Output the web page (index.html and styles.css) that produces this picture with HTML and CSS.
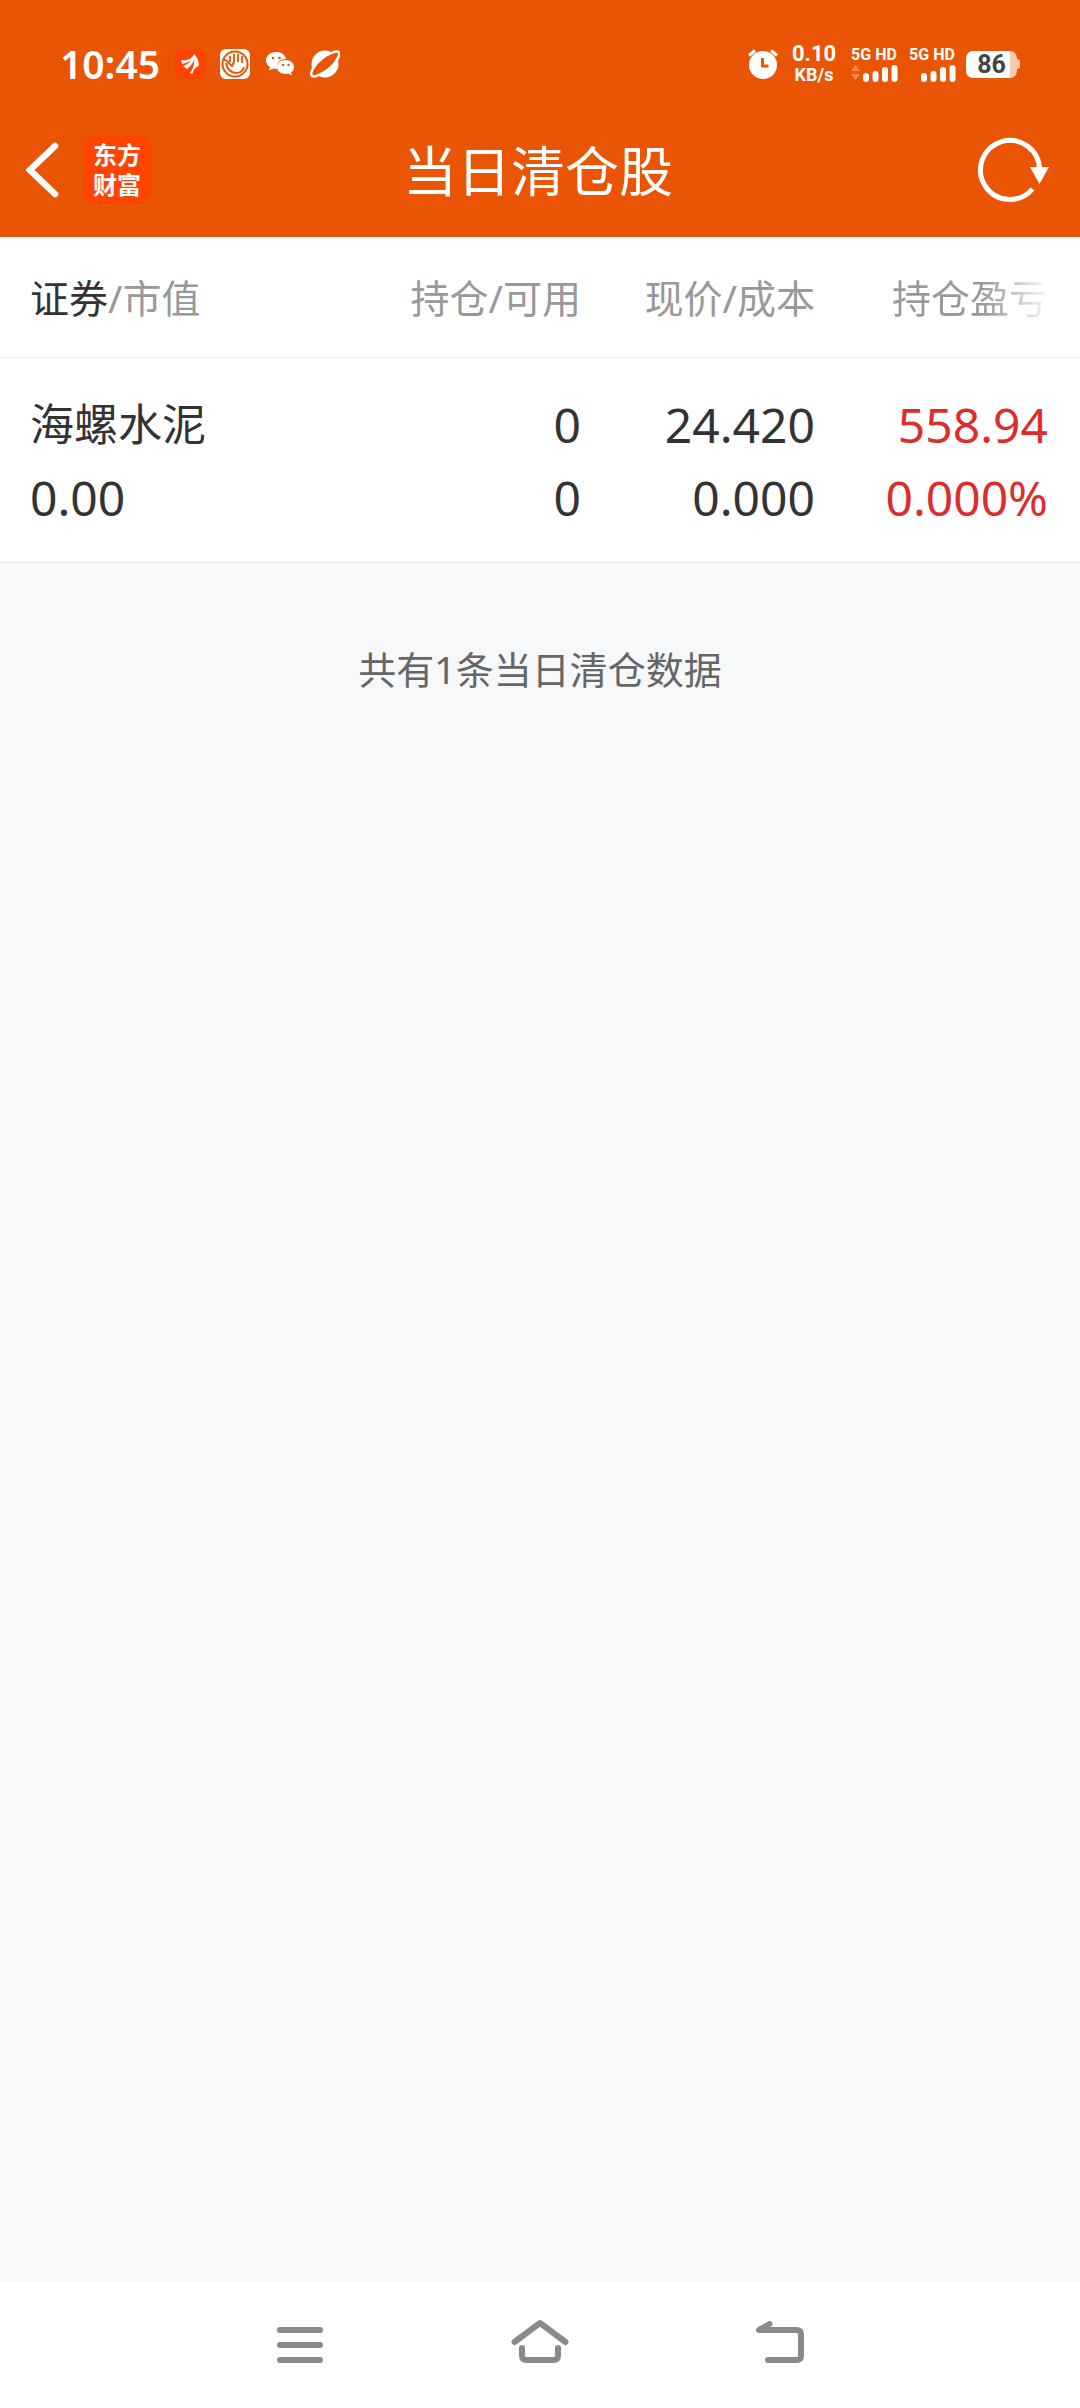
FILE: index.html
```html
<!DOCTYPE html>
<html lang="zh-CN">
<head>
<meta charset="utf-8">
<meta name="viewport" content="width=device-width">
<title>当日清仓股</title>
<link rel="stylesheet" href="styles.css">
</head>
<body>
<header class="top">
  <div class="status">
    <div class="status-left">
      <span class="clock">10:45</span>
      <svg class="status-icon" viewBox="0 0 30 30"><rect width="30" height="30" rx="5" fill="#ff4400"/><path d="M6 11c6 1 11-1 13-6 1 5-6 9-12 10zM8 17c6-2 9-6 11-12 2 6-2 11-7 15zM15 24c4-5 5-12 4-19 4 4 6 10 4 13-1-1-2 0-2 1-2 0-2 2-4 6z" fill="#fff"/></svg>
      <svg class="status-icon" viewBox="0 0 30 30"><rect width="30" height="30" rx="6" fill="#fff"/><g fill="none" stroke="#e95504"><circle cx="15" cy="15" r="12.500" stroke-width="2"/><path d="M10 7v6M14 5v7M18 5v8M22 7v7" stroke-width="1.800"/><path d="M4 11c3-1 6 5 8 6 1-2 2-3 2-5" stroke-width="2"/><path d="M6 14c1 6 5 10 10 10 4 0 7-2 8-6" stroke-width="2"/></g></svg>
      <svg class="status-icon" viewBox="0 0 30 30"><g fill="#fff"><path d="M11 3C5 3 1 7 1 11.500c0 3 1.500 5 4 6.500l-1 3.500 4-2 4 .5c-1-6 3-10 9-10C20 5.500 16 3 11 3z"/><path d="M20.500 11c-5 0-8.500 3-8.500 7s3.500 7 8.500 7l3-.5 3.500 2-1-3c2-1.500 3-3.500 3-5.500 0-4-3.500-7-8.500-7z"/></g><g fill="#e95504"><circle cx="8" cy="9" r="1.300"/><circle cx="14.500" cy="9" r="1.300"/><circle cx="18" cy="16" r="1.200"/><circle cx="23.500" cy="16" r="1.200"/></g></svg>
      <svg class="status-icon" viewBox="0 0 30 30"><circle cx="15" cy="15" r="13.500" fill="#fff"/><ellipse cx="15" cy="15" rx="15" ry="5" transform="rotate(-40 15 15)" fill="#e95504"/><path d="M22 3.500c6-2 8-1 7 3-.5 2-1.500 4-3 6M4 17.500c-5 8-3 12 4 9" fill="none" stroke="#fff" stroke-width="2.500"/></svg>
    </div>
    <div class="status-right">
      <svg class="status-icon" viewBox="0 0 30 30"><circle cx="15" cy="16" r="14" fill="#fff"/><path d="M1 6.500l6-5M29 6.500l-6-5" stroke="#fff" stroke-width="3"/><path d="M14.500 9v8h6" fill="none" stroke="#e95504" stroke-width="3"/></svg>
      <div class="speed"><span class="speed-value">0.10</span><span class="speed-unit">KB/s</span></div>
      <div class="signal"><span class="signal-label">5G HD</span><svg class="signal-bars" viewBox="0 0 48 18"><path d="M1 7l4.500-6 4.500 6zM1 10l4.500 6 4.500-6z" fill="#f58a50"/><path d="M16 12v3M25.500 10v5M35 6v9M44.500 4v11" stroke="#fff" stroke-width="6" stroke-linecap="round"/></svg></div>
      <div class="signal"><span class="signal-label">5G HD</span><svg class="signal-bars" viewBox="0 0 48 18"><path d="M16 12v3M25.500 10v5M35 6v9M44.500 4v11" stroke="#fff" stroke-width="6" stroke-linecap="round"/></svg></div>
      <div class="battery"><span class="battery-level">86</span></div>
    </div>
  </div>
  <div class="appbar">
    <div class="appbar-side">
      <button class="icon-button" type="button" aria-label="返回"><svg class="back-icon" viewBox="0 0 36 60"><path d="M29 6L4 30l25 24" fill="none" stroke="#fff" stroke-width="6.500" stroke-linecap="round"/></svg></button>
      <a class="logo" href="#"><span>东方</span><span>财富</span></a>
    </div>
    <h1 class="title">当日清仓股</h1>
    <div class="appbar-side appbar-end">
      <button class="icon-button" type="button" aria-label="刷新"><svg class="refresh-icon" viewBox="0 0 72 68"><path d="M54.500 53A29.500 29.500 0 1 1 61.500 34" fill="none" stroke="#fff" stroke-width="5"/><path d="M52 31h19l-9.500 17z" fill="#fff"/></svg></button>
    </div>
  </div>
</header>

<main class="content">
  <table class="holdings">
    <colgroup><col><col class="col-number"><col class="col-number"><col class="col-profit"></colgroup>
    <thead>
      <tr><th scope="col"><span class="strong">证券</span>/市值</th><th scope="col">持仓/可用</th><th scope="col">现价/成本</th><th scope="col"><span class="fade">持仓盈亏</span></th></tr>
    </thead>
    <tbody>
      <tr>
        <td><div class="name">海螺水泥</div><div>0.00</div></td>
        <td><div>0</div><div>0</div></td>
        <td><div>24.420</div><div>0.000</div></td>
        <td class="up"><div>558.94</div><div>0.000%</div></td>
      </tr>
    </tbody>
  </table>
  <p class="summary">共有1条当日清仓数据</p>
</main>

<nav class="navbar">
  <button class="nav-button" type="button" aria-label="最近任务"><svg class="nav-icon" viewBox="0 0 60 60"><path d="M10 15h40M10 30h40M10 45h40"/></svg></button>
  <button class="nav-button" type="button" aria-label="主屏幕"><svg class="nav-icon" viewBox="0 0 60 60"><path d="M4.500 27L30 8l25.500 19M12 33v7.500q0 4.500 4.500 4.500h27q4.500 0 4.500-4.500V33"/></svg></button>
  <button class="nav-button" type="button" aria-label="返回上一级"><svg class="nav-icon" viewBox="0 0 60 60"><path d="M19.500 9L9 15H46.500q4.500 0 4.500 4.500v21q0 4.500-4.500 4.500H18"/></svg></button>
</nav>
</body>
</html>
```
FILE: styles.css
```css
* {
  box-sizing: border-box;
}

body {
  display: flex;
  flex-direction: column;
  min-height: 100vh;
  margin: 0;
  background: #f7f8fa;
  color: #333;
  font-family: "Noto Sans", "Noto Sans CJK SC", sans-serif;
}

button {
  padding: 0;
  border: 0;
  background: none;
}

svg {
  display: block;
}

/* Status bar */
.top {
  padding-bottom: 25px;
  background: #e95504;
  color: #fff;
}

.status {
  display: flex;
  justify-content: space-between;
  align-items: center;
  height: 128px;
  padding: 0 60px;
}

.status-left {
  display: flex;
  align-items: center;
  gap: 15px;
}

.status-right {
  display: flex;
  align-items: center;
  gap: 10px;
  font-family: Roboto, sans-serif;
  font-weight: 700;
}

.clock {
  font-size: 39px;
  font-weight: 600;
  line-height: 40px;
}

.status-icon {
  width: 30px;
  height: 30px;
}

.speed,
.signal {
  display: flex;
  flex-direction: column;
  align-items: center;
}

.speed {
  width: 52px;
}

.speed-value {
  font-size: 22px;
  line-height: 22px;
}

.speed-unit {
  font-size: 18px;
  line-height: 20px;
}

.signal-label {
  font-size: 16px;
  line-height: 18px;
}

.signal-bars {
  width: 48px;
  height: 18px;
}

.battery {
  display: flex;
  align-items: center;
}

.battery-level {
  width: 51px;
  border-radius: 7px;
  background: linear-gradient(90deg, #fff 86%, #fbc9ae 86%);
  color: #444;
  font-size: 25px;
  line-height: 27px;
  text-align: center;
}

.battery::after {
  width: 3px;
  height: 10px;
  border-radius: 0 3px 3px 0;
  background: #fbc9ae;
  content: "";
}

/* App bar */
.appbar {
  display: flex;
  align-items: center;
  height: 84px;
  padding: 0 30px 0 26px;
}

.appbar-side {
  display: flex;
  flex: 1;
  align-items: center;
  gap: 21px;
}

.appbar-end {
  justify-content: flex-end;
}

.back-icon {
  width: 36px;
  height: 60px;
}

.logo {
  display: flex;
  flex-direction: column;
  align-items: center;
  justify-content: center;
  width: 68px;
  height: 68px;
  border-radius: 14px;
  background: #ff4400;
  color: #fff;
  font-size: 24px;
  font-weight: 700;
  line-height: 30px;
  text-decoration: none;
}

.title {
  margin: 0;
  padding-top: 2px;
  font-size: 54px;
  font-weight: 400;
  line-height: 80px;
}

.refresh-icon {
  width: 72px;
  height: 68px;
}

/* Holdings */
.content {
  flex: 1;
}

.holdings {
  width: 100%;
  border-collapse: separate;
  border-spacing: 0;
  background: #fff;
  table-layout: fixed;
}

.col-number {
  width: 234px;
}

.col-profit {
  width: 265px;
}

th,
td {
  padding: 0;
  border-bottom: 1px solid #ececec;
  text-align: right;
  white-space: nowrap;
}

th {
  height: 121px;
  padding-top: 2px;
  color: #999;
  font-size: 39px;
  font-weight: 400;
  line-height: 60px;
}

td {
  padding: 30px 0 28px;
  font-size: 48px;
  line-height: 73px;
}

th:first-child,
td:first-child {
  padding-left: 30px;
  text-align: left;
}

th:last-child,
td:last-child {
  padding-right: 32px;
}

.strong {
  color: #333;
}

.fade {
  background: linear-gradient(90deg, #999 58%, #f7f7f7);
  background-clip: text;
  color: transparent;
}

.name {
  font-size: 44px;
}

.up {
  color: #dd2c2c;
}

.summary {
  margin: 76px 0 0;
  color: #666;
  font-size: 38px;
  line-height: 60px;
  text-align: center;
}

/* System navigation */
.navbar {
  display: flex;
  justify-content: center;
  height: 126px;
  background: #fff;
}

.nav-button {
  display: flex;
  align-items: center;
  justify-content: center;
  width: 240px;
}

.nav-icon {
  width: 60px;
  height: 60px;
  fill: none;
  stroke: #8a8a8a;
  stroke-linecap: round;
  stroke-linejoin: round;
  stroke-width: 6;
}
```
